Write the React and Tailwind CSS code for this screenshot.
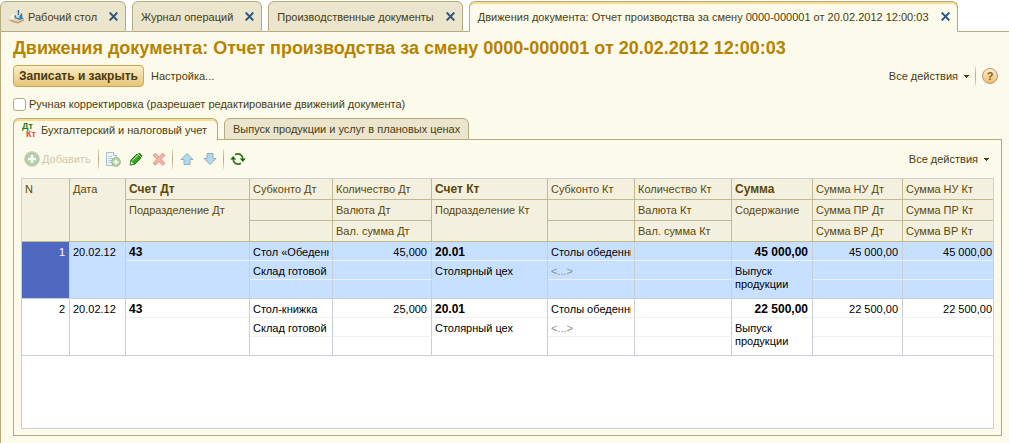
import React from "react";

const tabs = [
  { title: "Рабочий стол", icon: true },
  { title: "Журнал операций" },
  { title: "Производственные документы" },
  {
    title:
      "Движения документа: Отчет производства за смену 0000-000001 от 20.02.2012 12:00:03",
    active: true,
  },
];

const rows = [
  {
    n: 1,
    date: "20.02.12",
    debit: "43",
    item: "Стол «Обеденн",
    store: "Склад готовой",
    qty: "45,000",
    credit: "20.01",
    dept: "Столярный цех",
    group: "Столы обеденны",
    sum: "45 000,00",
    note: "Выпуск продукции",
    selected: true,
  },
  {
    n: 2,
    date: "20.02.12",
    debit: "43",
    item: "Стол-книжка",
    store: "Склад готовой",
    qty: "25,000",
    credit: "20.01",
    dept: "Столярный цех",
    group: "Столы обеденны",
    sum: "22 500,00",
    note: "Выпуск продукции",
  },
];

function DeskIcon() {
  return (
    <svg className="w-4 h-4 shrink-0" viewBox="0 0 16 16" aria-hidden="true">
      <path d="M0 11l5-2 10 1v1.500l-6 3-6-1.500z" fill="#c19a72" />
      <path d="M0 10.500l5-2 10 1.500-6 3z" fill="#ecd3b0" />
      <path d="M1 8l4-4 1 5-3 1.500z" fill="#fff6d8" />
      <path d="M5 6.500l7-0.500 2.500 3.500-4 1.500-5-2z" fill="#3f86b0" />
      <path d="M7 5.500l4 0.500-1 3-3-0.500z" fill="#b4e0ea" />
      <path d="M9.500 1v5M12.500 4.500v3" stroke="#2f6290" strokeWidth="1.300" />
      <path d="M8 2l1 3" stroke="#e5b64a" strokeWidth="1" />
    </svg>
  );
}

function CloseIcon() {
  return (
    <svg className="w-[9px] h-[9px]" viewBox="0 0 9 9" aria-hidden="true">
      <path d="M0.700 0.500l7.600 8M8.300 0.500l-7.600 8" stroke="#2b587f" strokeWidth="1.900" />
    </svg>
  );
}

function DtKtIcon() {
  return (
    <svg className="w-4 h-4 shrink-0" viewBox="0 0 16 16" aria-hidden="true">
      <g fontFamily="Liberation Sans, sans-serif" fontWeight="bold" fontSize="9">
        <text x="0" y="7" fill="#1d7a12">
          Дт
        </text>
        <text x="4" y="15" fill="#f23b3b">
          Кт
        </text>
      </g>
    </svg>
  );
}

function AddIcon() {
  return (
    <svg className="w-4 h-4 shrink-0" viewBox="0 0 16 16" aria-hidden="true">
      <circle cx="8" cy="8" r="7.300" fill="#b5cfa8" stroke="#c5cbb8" />
      <path d="M8 4v8M4 8h8" stroke="#fff" strokeWidth="2.400" />
    </svg>
  );
}

function CopyIcon() {
  return (
    <svg className="w-4 h-4" viewBox="0 0 16 16" aria-hidden="true">
      <path d="M1.500 1.500h7l3 3v10h-10z" fill="#eef4f6" stroke="#a9c0ce" />
      <path d="M8.500 1.500v3h3" fill="#fff" stroke="#a9c0ce" />
      <path d="M3 5.500h4M3 7.500h6M3 9.500h4M3 11.500h3" stroke="#b9ccd6" />
      <circle cx="11" cy="11" r="4.400" fill="#b0d2a2" stroke="#9cba92" />
      <path d="M11 8.500v5M8.500 11h5" stroke="#fff" strokeWidth="1.600" />
    </svg>
  );
}

function PencilIcon() {
  return (
    <svg className="w-4 h-4" viewBox="0 0 16 16" aria-hidden="true">
      <path d="M3 9l6-6 4 4-6 6-4.500 1z" fill="#35a51f" stroke="#1f7612" />
      <path d="M4.500 9.500l6-6" stroke="#9be37f" strokeWidth="1.300" />
      <path d="M3 9.500l3.500 3.500-4.500 1z" fill="#dff0c8" stroke="#1f7612" strokeWidth="0.700" />
      <path d="M10 2.500l1.500-0.800 3 3-1 1.600z" fill="#1f7612" />
    </svg>
  );
}

function DeleteIcon() {
  return (
    <svg className="w-4 h-4" viewBox="0 0 16 16" aria-hidden="true">
      <path d="M3 3l10 10.500M13 3l-10 10.500" stroke="#e3988a" strokeWidth="3.800" />
      <path d="M3.500 3.500l9 9.500M12.500 3.500l-9 9.500" stroke="#f5b5a8" strokeWidth="2" />
    </svg>
  );
}

function ArrowIcon({ down }) {
  return (
    <svg
      className={down ? "w-4 h-4 rotate-180" : "w-4 h-4"}
      viewBox="0 0 16 16"
      aria-hidden="true"
    >
      <path
        d="M8 2.500L14 8.500H11V13.500H5V8.500H2z"
        fill="#b5d8ec"
        stroke="#8fafc4"
        strokeLinejoin="round"
      />
    </svg>
  );
}

function RefreshIcon() {
  return (
    <svg className="w-4 h-4" viewBox="0 0 16 16" aria-hidden="true">
      <path d="M5 3.800Q8 2 11 4Q12.800 5.300 12.800 8" fill="none" stroke="#2b7a1a" strokeWidth="1.700" />
      <path d="M11 12.200Q8 14 5 12Q3.200 10.700 3.200 8" fill="none" stroke="#2b7a1a" strokeWidth="1.700" />
      <path d="M9.800 7.500h6l-3 3.500zM0.200 8.500h6l-3-3.500z" fill="#1f6a10" />
    </svg>
  );
}

function Divider() {
  return (
    <div className="w-px h-5 bg-gradient-to-b from-[#e6dfc2] via-[#b5a97e] to-[#e6dfc2]" />
  );
}

function AllActions() {
  return (
    <button className="flex items-center gap-[6px]">
      Все действия
      <svg className="w-[5px] h-[3px]" viewBox="0 0 5 3" aria-hidden="true">
        <path d="M0 0h5v1H4v1H3v1H2V2H1V1H0z" fill="#4a3c10" />
      </svg>
    </button>
  );
}

function Th({ children, span, bold, last }) {
  return (
    <th
      rowSpan={span}
      className={`h-[21px] pl-[3px] pt-1 align-top text-left leading-3 whitespace-nowrap border-b border-[#c3b98f] ${
        bold ? "font-bold text-xs" : "font-normal"
      } ${last ? "" : "border-r"}`}
    >
      {children}
    </th>
  );
}

function Td({ children, span, right, bold, last, end, wrap }) {
  return (
    <td
      rowSpan={span}
      className={`h-[19px] pt-1 pl-[3px] align-top leading-[13px] border-r-[#c9cfd6] ${
        right ? "text-right" : ""
      } ${bold ? "font-bold text-xs" : ""} ${
        last ? "pr-px" : right || wrap ? "pr-1 border-r" : "pr-[3px] border-r"
      } ${end ? "border-b border-b-[#c9cfd6]" : "border-b border-b-[#f0f0f0]"}`}
    >
      <div className={wrap ? "" : "h-[13px] overflow-hidden whitespace-nowrap"}>
        {children}
      </div>
    </td>
  );
}

function Entry({ row }) {
  return (
    <tbody className={row.selected ? "bg-[#c8e0ff]" : "bg-white"}>
      <tr>
        <td
          rowSpan={3}
          className={`pt-1 pr-1 align-top text-right leading-[13px] border-r border-b border-[#c9cfd6] ${
            row.selected ? "bg-[#5069c0] text-white" : ""
          }`}
        >
          {row.n}
        </td>
        <Td span={3} end>{row.date}</Td>
        <Td bold>{row.debit}</Td>
        <Td>{row.item}</Td>
        <Td right>{row.qty}</Td>
        <Td bold>{row.credit}</Td>
        <Td>{row.group}</Td>
        <Td />
        <Td bold right>{row.sum}</Td>
        <Td right>{row.sum}</Td>
        <Td right last>{row.sum}</Td>
      </tr>
      <tr>
        <Td span={2} end />
        <Td>{row.store}</Td>
        <Td />
        <Td span={2} end>{row.dept}</Td>
        <Td>
          <span className="text-[#8c8c8c]">&lt;...&gt;</span>
        </Td>
        <Td />
        <Td span={2} end wrap>{row.note}</Td>
        <Td />
        <Td last />
      </tr>
      <tr>
        <Td end />
        <Td end />
        <Td end />
        <Td end />
        <Td end />
        <Td end last />
      </tr>
    </tbody>
  );
}

function EntriesTable() {
  return (
    <table className="w-full table-fixed border-separate border-spacing-0 text-black">
      <colgroup>
        <col className="w-[48px]" />
        <col className="w-[56px]" />
        <col className="w-[124px]" />
        <col className="w-[83px]" />
        <col className="w-[99px]" />
        <col className="w-[116px]" />
        <col className="w-[87px]" />
        <col className="w-[97px]" />
        <col className="w-[81px]" />
        <col className="w-[90px]" />
        <col className="w-[90px]" />
      </colgroup>
      <thead className="bg-[#f4f0df] text-[#5c4808]">
        <tr>
          <Th span={3}>N</Th>
          <Th span={3}>Дата</Th>
          <Th bold>Счет Дт</Th>
          <Th>Субконто Дт</Th>
          <Th>Количество Дт</Th>
          <Th bold>Счет Кт</Th>
          <Th>Субконто Кт</Th>
          <Th>Количество Кт</Th>
          <Th bold>Сумма</Th>
          <Th>Сумма НУ Дт</Th>
          <Th last>Сумма НУ Кт</Th>
        </tr>
        <tr>
          <Th span={2}>Подразделение Дт</Th>
          <Th />
          <Th>Валюта Дт</Th>
          <Th span={2}>Подразделение Кт</Th>
          <Th />
          <Th>Валюта Кт</Th>
          <Th span={2}>Содержание</Th>
          <Th>Сумма ПР Дт</Th>
          <Th last>Сумма ПР Кт</Th>
        </tr>
        <tr>
          <Th />
          <Th>Вал. сумма Дт</Th>
          <Th />
          <Th>Вал. сумма Кт</Th>
          <Th>Сумма ВР Дт</Th>
          <Th last>Сумма ВР Кт</Th>
        </tr>
      </thead>
      {rows.map((row) => (
        <Entry key={row.n} row={row} />
      ))}
    </table>
  );
}

function App() {
  return (
    <div className="min-h-screen flex flex-col bg-white font-['Liberation_Sans',Arial,sans-serif] text-[11px] leading-4 text-[#4a3c10]">
      {/* Window tabs */}
      <nav className="flex items-end pt-px">
        {tabs.map((tab) => (
          <React.Fragment key={tab.title}>
            <div
              className={`h-[31px] flex items-center gap-3 pl-2 pr-[7px] rounded-t-md border border-[#b5a97e] whitespace-nowrap ${
                tab.active
                  ? "bg-[#fcfaea] border-b-[#fcfaea] shadow-[inset_0_2px_0_#f9dd92]"
                  : "bg-[#ebe5cd]"
              }`}
            >
              <a href="#" className="flex items-center gap-[3px]">
                {tab.icon && <DeskIcon />}
                {tab.title}
              </a>
              <button aria-label="Закрыть">
                <CloseIcon />
              </button>
            </div>
            {!tab.active && (
              <div className="w-[6px] h-px bg-[#b5a97e]" />
            )}
          </React.Fragment>
        ))}
        <div className="flex-1 h-px bg-[#b5a97e]" />
      </nav>

      <main className="flex-1 flex flex-col bg-[#fcfaea] border-l border-[#b5a97e] pl-3 pr-[7px] pb-[7px]">
        <h1 className="mt-1 text-lg leading-6 font-bold text-[#b58300]">
          Движения документа: Отчет производства за смену 0000-000001 от
          20.02.2012 12:00:03
        </h1>

        {/* Form commands */}
        <div className="mt-[5px] flex items-center pr-1">
          <button className="h-[22px] px-[5px] rounded border border-[#cfa84c] bg-gradient-to-b from-[#fbeecb] to-[#e8c577] text-xs font-bold">
            Записать и закрыть
          </button>
          <button className="ml-[7px]">Настройка...</button>
          <div className="ml-auto flex items-center gap-[6px]">
            <AllActions />
            <Divider />
            <button
              aria-label="Справка"
              className="w-4 h-4 flex items-center justify-center rounded-full border border-[#a89a80] bg-gradient-to-b from-[#fdeccf] to-[#f3bd68] font-bold leading-3 text-[#8a5a20]"
            >
              ?
            </button>
          </div>
        </div>

        <label className="mt-[9px] flex items-center gap-[3px]">
          <input
            type="checkbox"
            className="appearance-none w-[13px] h-[13px] rounded-[3px] border border-[#b5a97e] bg-white"
          />
          Ручная корректировка (разрешает редактирование движений документа)
        </label>

        {/* Register tabs */}
        <div className="mt-[6px] flex items-end">
          <button className="h-[22px] flex items-center gap-[3px] pl-2 pr-[10px] rounded-t-md border border-b-0 border-[#b5a97e] bg-[#fcfaea] shadow-[inset_0_2px_0_#f9dd92]">
            <DtKtIcon />
            Бухгалтерский и налоговый учет
          </button>
          <div className="w-[6px] h-px bg-[#b5a97e]" />
          <button className="h-[22px] px-2 rounded-t-md border border-[#b5a97e] bg-[#ebe5cd]">
            Выпуск продукции и услуг в плановых ценах
          </button>
          <div className="flex-1 h-px bg-[#b5a97e]" />
        </div>

        <section className="flex-1 flex flex-col border border-t-0 border-[#b5a97e] px-[7px] pb-[6px]">
          <div className="h-[38px] flex items-center pl-[3px] pr-[5px]">
            <button disabled className="flex items-center gap-[2px] text-[#cfc9b0]">
              <AddIcon />
              Добавить
            </button>
            <div className="ml-[7px] mr-[6px]">
              <Divider />
            </div>
            <div className="flex gap-[7px]">
              <button aria-label="Скопировать"><CopyIcon /></button>
              <button aria-label="Изменить"><PencilIcon /></button>
              <button aria-label="Удалить"><DeleteIcon /></button>
            </div>
            <div className="ml-[5px] mr-[6px]">
              <Divider />
            </div>
            <div className="flex gap-[7px]">
              <button aria-label="Вверх"><ArrowIcon /></button>
              <button aria-label="Вниз"><ArrowIcon down /></button>
            </div>
            <div className="ml-[5px] mr-[6px]">
              <Divider />
            </div>
            <button aria-label="Обновить"><RefreshIcon /></button>
            <div className="ml-auto">
              <AllActions />
            </div>
          </div>

          <div className="flex-1 bg-white border border-[#cdd0cc]">
            <EntriesTable />
          </div>
        </section>
      </main>
    </div>
  );
}

export default App;
